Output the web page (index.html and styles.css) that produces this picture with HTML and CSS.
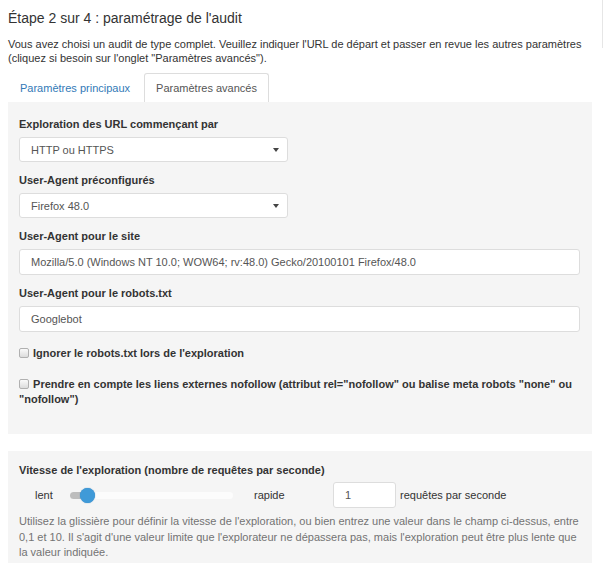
FILE: index.html
```html
<!DOCTYPE html>
<html lang="fr">
<head>
<meta charset="utf-8">
<title>Étape 2 sur 4</title>
<link rel="stylesheet" href="styles.css">
</head>
<body>
<div class="edge"></div>
<h1 class="title">Étape 2 sur 4 : paramétrage de l'audit</h1>
<p class="intro">Vous avez choisi un audit de type complet. Veuillez indiquer l'URL de départ et passer en revue les autres paramètres (cliquez si besoin sur l'onglet "Paramètres avancés").</p>

<ul class="tabs">
  <li class="tab"><a href="#">Paramètres principaux</a></li>
  <li class="tab active"><span>Paramètres avancés</span></li>
</ul>

<div class="panel first">
  <div class="group">
    <label class="lbl">Exploration des URL commençant par</label>
    <div class="select"><span>HTTP ou HTTPS</span><i class="caret"></i></div>
  </div>
  <div class="group">
    <label class="lbl">User-Agent préconfigurés</label>
    <div class="select"><span>Firefox 48.0</span><i class="caret"></i></div>
  </div>
  <div class="group">
    <label class="lbl">User-Agent pour le site</label>
    <div class="input">Mozilla/5.0 (Windows NT 10.0; WOW64; rv:48.0) Gecko/20100101 Firefox/48.0</div>
  </div>
  <div class="group">
    <label class="lbl">User-Agent pour le robots.txt</label>
    <div class="input">Googlebot</div>
  </div>
  <div class="check"><i class="box"></i> Ignorer le robots.txt lors de l'exploration</div>
  <div class="check two"><i class="box"></i> Prendre en compte les liens externes nofollow (attribut rel="nofollow" ou balise meta robots "none" ou "nofollow")</div>
</div>

<div class="panel second">
  <label class="lbl">Vitesse de l'exploration (nombre de requêtes par seconde)</label>
  <div class="speed">
    <span class="lent">lent</span>
    <div class="slider"><div class="fill"></div><div class="thumb"></div></div>
    <span class="rapide">rapide</span>
    <div class="num">1</div>
    <span class="unit">requêtes par seconde</span>
  </div>
  <p class="help">Utilisez la glissière pour définir la vitesse de l'exploration, ou bien entrez une valeur dans le champ ci-dessus, entre 0,1 et 10. Il s'agit d'une valeur limite que l'explorateur ne dépassera pas, mais l'exploration peut être plus lente que la valeur indiquée.</p>
</div>
</body>
</html>
```

FILE: styles.css
```css
html, body {
  margin: 0;
  padding: 0;
  background: #fff;
}
body {
  padding: 0 13px 0 8px;
  font-family: "Liberation Sans", Arial, sans-serif;
  font-size: 11px;
  color: #333;
  position: relative;
  overflow: hidden;
}
.edge {
  position: absolute;
  right: 0;
  top: 0;
  width: 2px;
  height: 48px;
  border-left: 1px solid #e6e6e6;
}
.title {
  margin: 9px 0 0;
  font-size: 14px;
  font-weight: normal;
  line-height: 18px;
  color: #333;
}
.intro {
  margin: 10px 0 0;
  line-height: 14px;
  color: #333;
}
.tabs {
  list-style: none;
  margin: 8px 0 0;
  padding: 0;
  display: flex;
  border-bottom: 1px solid #f5f5f5;
}
.tab {
  height: 28px;
  display: flex;
  align-items: center;
  padding: 0 11px;
  border: 1px solid transparent;
  border-bottom: 0;
  margin-right: 2px;
}
.tab a {
  color: #337ab7;
  text-decoration: none;
}
.tab.active {
  background: #fff;
  border-color: #ddd;
  border-radius: 3px 3px 0 0;
  color: #555;
}
.panel {
  background: #f5f5f5;
  padding: 0 12px 0 11px;
}
.panel.first {
  padding-top: 14px;
  padding-bottom: 27px;
}
.group {
  margin-bottom: 11px;
}
.lbl {
  display: block;
  font-weight: bold;
  line-height: 14px;
  margin-bottom: 6px;
  color: #333;
}
.select, .input, .num {
  box-sizing: border-box;
  height: 25px;
  background: #fff;
  border: 1px solid #ddd;
  border-radius: 3px;
  display: flex;
  align-items: center;
  padding: 0 11px;
  color: #555;
}
.input {
  height: 26px;
}
.select {
  width: 269px;
  justify-content: space-between;
  padding-right: 8px;
}
.caret {
  width: 0;
  height: 0;
  border-left: 3px solid transparent;
  border-right: 3px solid transparent;
  border-top: 4px solid #444;
}
.group:nth-child(4) {
  margin-bottom: 14px;
}
.check {
  font-weight: bold;
  line-height: 15px;
  display: block;
}
.check.two {
  margin-top: 16px;
}
.box {
  display: inline-block;
  box-sizing: border-box;
  width: 10px;
  height: 10px;
  border: 1px solid #b0b0b0;
  background: linear-gradient(#fafafa, #dcdcdc);
  border-radius: 2px;
  vertical-align: -1px;
  margin-right: 1px;
}
.panel.second {
  margin-top: 17px;
  padding-top: 12px;
  padding-bottom: 10px;
}
.panel.second .lbl {
  margin-bottom: 5px;
}
.speed {
  display: flex;
  align-items: center;
  height: 26px;
}
.lent {
  margin-left: 16px;
  width: 35px;
}
.slider {
  position: relative;
  width: 163px;
  height: 7px;
  border-radius: 4px;
  background: #fcfcfc;
}
.fill {
  width: 18px;
  height: 100%;
  border-radius: 4px 0 0 4px;
  background: #bdbdbd;
}
.thumb {
  position: absolute;
  left: 10px;
  top: -4px;
  width: 15px;
  height: 15px;
  border-radius: 50%;
  background: #3f9ad8;
  box-shadow: 0 0 1px #2a7ab8;
}
.rapide {
  margin-left: 21px;
  width: 79px;
}
.num {
  width: 63px;
  height: 26px;
}
.unit {
  margin-left: 4px;
}
.help {
  margin: 6px 0 0;
  line-height: 15.5px;
  color: #737373;
}
```
